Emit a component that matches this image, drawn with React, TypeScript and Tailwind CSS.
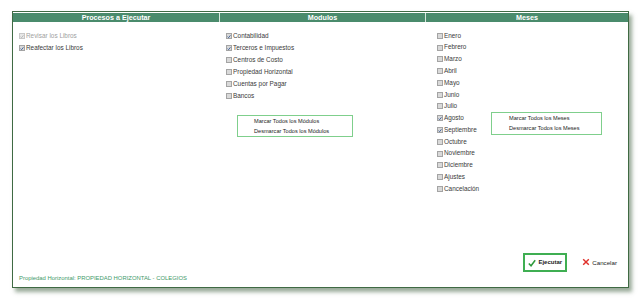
import React from "react";

type Item = { label: string; checked?: boolean; disabled?: boolean };

const procesos: Item[] = [
  { label: "Revisar los Libros", checked: true, disabled: true },
  { label: "Reafectar los Libros", checked: true },
];

const modulos: Item[] = [
  { label: "Contabilidad", checked: true },
  { label: "Terceros e Impuestos", checked: true },
  { label: "Centros de Costo" },
  { label: "Propiedad Horizontal" },
  { label: "Cuentas por Pagar" },
  { label: "Bancos" },
];

const meses: Item[] = [
  { label: "Enero" },
  { label: "Febrero" },
  { label: "Marzo" },
  { label: "Abril" },
  { label: "Mayo" },
  { label: "Junio" },
  { label: "Julio" },
  { label: "Agosto", checked: true },
  { label: "Septiembre", checked: true },
  { label: "Octubre" },
  { label: "Noviembre" },
  { label: "Diciembre" },
  { label: "Ajustes" },
  { label: "Cancelación" },
];

function Check({ item, tight }: { item: Item; tight?: boolean }) {
  return (
    <label
      className={`flex items-center gap-[1px] text-[6.4px] leading-none ${
        tight ? "h-[11.77px]" : "h-[12px]"
      } ${item.disabled ? "text-[#a0a0a0]" : "text-[#3a3a3a]"}`}
    >
      <span
        className={`w-[6px] h-[6px] border flex items-center justify-center ${
          item.disabled
            ? "border-[#c8c8c8] bg-[#e8e8e8]"
            : "border-[#a4a4a4] bg-[#d9d9d9]"
        }`}
      >
        {item.checked && (
          <svg viewBox="0 0 6 6" className="w-[5px] h-[5px]">
            <path
              d="M0.8 3.2 L2.4 4.7 L5.2 1.2"
              fill="none"
              stroke={item.disabled ? "#b0b0b0" : "#2a4f8f"}
              strokeWidth="1.2"
            />
          </svg>
        )}
      </span>
      <span>{item.label}</span>
    </label>
  );
}

function ActionBox({ lines, className }: { lines: string[]; className: string }) {
  return (
    <div
      className={`border border-[#7fcf8c] flex flex-col justify-center gap-[3px] text-[5.6px] leading-[7px] text-[#222] ${className}`}
    >
      {lines.map((l) => (
        <span key={l}>{l}</span>
      ))}
    </div>
  );
}

export default function App() {
  return (
    <div
      className="w-[643px] h-[301px] bg-white overflow-hidden pt-[11px] pl-[12px]"
      style={{ fontFamily: '"Liberation Sans", Arial, sans-serif' }}
    >
      <div className="w-[617px] h-[277px] border border-[#3f6a43] bg-white flex flex-col shadow-[3px_4px_4px_rgba(70,100,70,0.55)]">
        <div className="grid grid-cols-[207px_206px_1fr] h-[9px] mt-[1px] bg-[#4a8b6c] text-white text-[7.2px] font-bold leading-[9px] text-center">
          <div className="border-r border-[#d8e8dd]">Procesos a Ejecutar</div>
          <div className="border-r border-[#d8e8dd]">Modulos</div>
          <div>Meses</div>
        </div>

        <div className="flex-1 grid grid-cols-[207px_206px_1fr] pt-[8px]">
          <div className="pl-[6px] flex flex-col">
            {procesos.map((p) => (
              <Check key={p.label} item={p} />
            ))}
          </div>
          <div className="pl-[6px] flex flex-col">
            {modulos.map((m) => (
              <Check key={m.label} item={m} />
            ))}
            <ActionBox
              lines={["Marcar Todos los Módulos", "Desmarcar Todos los Módulos"]}
              className="mt-[13px] ml-[11px] w-[116px] h-[22px] pl-[16px]"
            />
          </div>
          <div className="pl-[11px] flex items-start">
            <div className="flex flex-col w-[54px]">
              {meses.map((m) => (
                <Check key={m.label} item={m} tight />
              ))}
            </div>
            <ActionBox
              lines={["Marcar Todos los Meses", "Desmarcar Todos los Meses"]}
              className="mt-[82px] w-[111px] h-[23px] pl-[17px]"
            />
          </div>
        </div>

        <div className="flex items-end justify-between pl-[6px] pr-[11px] pb-[5px]">
          <span className="text-[5.9px] text-[#3f9a6a] leading-none">
            Propiedad Horizontal: PROPIEDAD HORIZONTAL - COLEGIOS
          </span>
          <div className="flex items-center gap-[15px] mb-[10px]">
            <button
              type="button"
              className="w-[44px] h-[19px] border-2 border-[#3fae52] flex items-center justify-center gap-[2px] text-[6px] font-bold text-[#222]"
            >
              <svg viewBox="0 0 10 10" className="w-[8px] h-[8px]">
                <path
                  d="M1 5.5 L3.8 8.5 L9 1.5"
                  fill="none"
                  stroke="#2f9a3c"
                  strokeWidth="1.9"
                />
              </svg>
              Ejecutar
            </button>
            <button
              type="button"
              className="flex items-center gap-[2px] text-[6.2px] text-[#222]"
            >
              <svg viewBox="0 0 10 10" className="w-[8px] h-[8px]">
                <path
                  d="M1.5 1.5 L8.5 8.5 M8.5 1.5 L1.5 8.5"
                  fill="none"
                  stroke="#e0302a"
                  strokeWidth="1.8"
                />
              </svg>
              Cancelar
            </button>
          </div>
        </div>
      </div>
    </div>
  );
}
